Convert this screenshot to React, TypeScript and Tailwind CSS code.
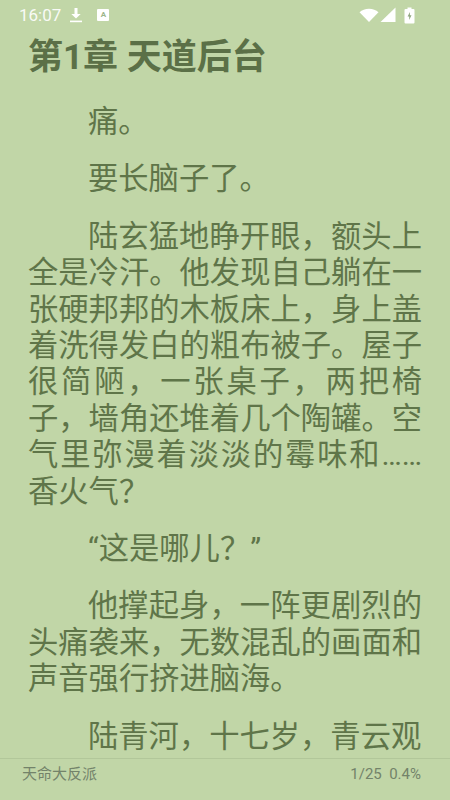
import React from 'react';

const font = { fontFamily: 'Roboto, "Noto Sans CJK SC", sans-serif' };

const paragraphs = [
  '痛。',
  '要长脑子了。',
  '陆玄猛地睁开眼，额头上全是冷汗。他发现自己躺在一张硬邦邦的木板床上，身上盖着洗得发白的粗布被子。屋子很简陋，一张桌子，两把椅子，墙角还堆着几个陶罐。空气里弥漫着淡淡的霉味和……香火气？',
  '“这是哪儿？”',
  '他撑起身，一阵更剧烈的头痛袭来，无数混乱的画面和声音强行挤进脑海。',
  '陆青河，十七岁，青云观',
];

const StatusBar = () => (
  <div className="flex h-[30px] flex-shrink-0 items-center pl-[19px] pr-[35px] text-white">
    <span className="text-[17px] leading-none opacity-90">16:07</span>
    <svg className="ml-[8px]" width="14" height="16" viewBox="0 0 14 16" fill="currentColor">
      <path d="M5.500 1h3v6h3.200L7 11.600 2.300 7h3.200z" />
      <rect x="1" y="13.600" width="12" height="1.600" />
    </svg>
    <div className="ml-[14px] flex h-[12px] w-[12px] items-center justify-center rounded-[1px] bg-white text-[8px] font-bold leading-none text-[#9db58c]">
      A
    </div>
    <div className="ml-auto flex items-center">
      <svg width="20" height="16" viewBox="0 0 20 16" fill="currentColor">
        <path d="M0.500 5.200C3 3 6.200 1.800 10 1.800s7 1.200 9.500 3.400L10 15z" />
      </svg>
      <svg className="ml-[1px]" width="16" height="16" viewBox="0 0 16 16" fill="currentColor">
        <path d="M15.500 0.500V15H0.500z" />
      </svg>
      <svg className="ml-[8px]" width="11" height="17" viewBox="0 0 11 17" fill="currentColor">
        <path d="M3.500 0.500h4V2H9.500a1 1 0 0 1 1 1v12.500a1 1 0 0 1-1 1h-8a1 1 0 0 1-1-1V3a1 1 0 0 1 1-1h2z" />
        <path d="M5.900 5L3.600 9.600h1.600V13l2.300-4.800H5.900z" fill="#8fa67f" />
      </svg>
    </div>
  </div>
);

export default function App() {
  return (
    <div className="flex h-[800px] w-[450px] flex-col overflow-hidden bg-[#c1d6a7]" style={font}>
      <StatusBar />
      <h1 className="mt-[6px] px-[28px] text-[35px] font-bold leading-[44px] text-[#5b7047]">第1章 天道后台</h1>
      <div className="mt-[24px] flex flex-1 flex-col gap-[21px] overflow-hidden px-[28px] text-[30.300px] leading-[36.400px] text-[#5f7549]">
        {paragraphs.map((p) => (
          <p key={p} className="indent-[60px] [text-align:justify]">
            {p}
          </p>
        ))}
      </div>
      <div className="flex h-[42px] flex-shrink-0 items-start justify-between border-t border-[#b2c79a] pl-[22px] pr-[29px] pt-[5px] text-[15px] leading-[20px] text-[#73836a]">
        <span>天命大反派</span>
        <span className="whitespace-pre">1/25  0.4%</span>
      </div>
    </div>
  );
}
